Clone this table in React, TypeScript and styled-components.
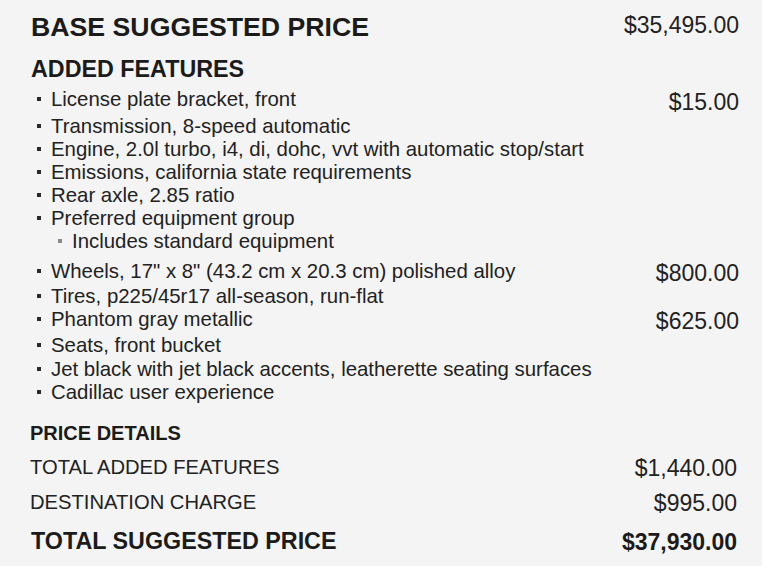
import React from "react";
import styled, { createGlobalStyle } from "styled-components";

const Global = createGlobalStyle`
  html, body { margin: 0; padding: 0; background: #ffffff; }
  body { font-family: "Liberation Sans", Arial, sans-serif; color: #222; }
`;

const Panel = styled.div`
  width: 762px;
  height: 566px;
  box-sizing: border-box;
  background: #f4f4f4;
  padding: 12px 23px 0 30px;
  display: flex;
  flex-direction: column;
`;

const HeaderRow = styled.div`
  display: flex;
  justify-content: space-between;
  align-items: flex-start;
  padding-left: 1px;
`;

const BigTitle = styled.div`
  font-weight: 700;
  font-size: 26.7px;
  line-height: 31px;
  color: #1b1b1b;
`;

const BigPrice = styled.div`
  font-size: 23px;
  line-height: 26px;
  color: #222;
`;

const SectionTitle = styled.div`
  margin-top: 12px;
  padding-left: 1px;
  font-weight: 700;
  font-size: 23.3px;
  line-height: 28px;
  color: #1b1b1b;
`;

const FeatureList = styled.ul`
  list-style: none;
  margin: 5px 0 0 0;
  padding: 0 0 0 1px;
  display: flex;
  flex-direction: column;
`;

const FeatureRow = styled.li<{ $gapAfter?: number }>`
  display: flex;
  justify-content: space-between;
  align-items: flex-start;
  margin-bottom: ${(p) => p.$gapAfter ?? 0}px;
`;

const FeatureMain = styled.div`
  display: flex;
  flex-direction: column;
`;

const FeatureLine = styled.div<{ $sub?: boolean }>`
  display: flex;
  align-items: flex-start;
  padding-left: ${(p) => (p.$sub ? 27 : 6)}px;
  gap: 10px;
  font-size: 20.4px;
  line-height: 23px;
  color: #222;
  white-space: nowrap;
`;

const Bullet = styled.span<{ $sub?: boolean }>`
  flex: none;
  width: 4px;
  height: 4px;
  margin-top: 9px;
  background: ${(p) => (p.$sub ? "#8a8a8a" : "#2a2a2a")};
`;

const FeaturePrice = styled.div<{ $h: number }>`
  font-size: 23px;
  line-height: ${(p) => p.$h}px;
  padding-top: 1px;
  color: #222;
`;

const DetailsTitle = styled.div`
  margin-top: 17px;
  font-weight: 700;
  font-size: 20px;
  line-height: 24px;
  color: #1b1b1b;
`;

const DetailRow = styled.div<{ $top: number }>`
  display: flex;
  justify-content: space-between;
  align-items: flex-start;
  margin-top: ${(p) => p.$top}px;
  padding-right: 2px;
`;

const DetailLabel = styled.div<{ $strong?: boolean }>`
  font-size: ${(p) => (p.$strong ? 23.3 : 20.2)}px;
  font-weight: ${(p) => (p.$strong ? 700 : 400)};
  line-height: 27px;
  padding-left: ${(p) => (p.$strong ? 1 : 0)}px;
  color: ${(p) => (p.$strong ? "#1b1b1b" : "#222")};
`;

const DetailPrice = styled.div<{ $strong?: boolean }>`
  font-size: 23px;
  font-weight: ${(p) => (p.$strong ? 700 : 400)};
  line-height: 29px;
  color: ${(p) => (p.$strong ? "#1b1b1b" : "#222")};
`;

type Feature = {
  text: string;
  price?: string;
  rowH?: number;
  gapAfter?: number;
  sub?: string[];
};

const features: Feature[] = [
  { text: "License plate bracket, front", price: "$15.00", rowH: 26 },
  { text: "Transmission, 8-speed automatic" },
  { text: "Engine, 2.0l turbo, i4, di, dohc, vvt with automatic stop/start" },
  { text: "Emissions, california state requirements" },
  { text: "Rear axle, 2.85 ratio" },
  { text: "Preferred equipment group", sub: ["Includes standard equipment"], gapAfter: 7 },
  { text: "Wheels, 17\" x 8\" (43.2 cm x 20.3 cm) polished alloy", price: "$800.00", rowH: 24 },
  { text: "Tires, p225/45r17 all-season, run-flat" },
  { text: "Phantom gray metallic", price: "$625.00", rowH: 25 },
  { text: "Seats, front bucket", gapAfter: 1 },
  { text: "Jet black with jet black accents, leatherette seating surfaces" },
  { text: "Cadillac user experience" },
];

export default function App() {
  return (
    <>
      <Global />
      <Panel>
        <HeaderRow>
          <BigTitle>BASE SUGGESTED PRICE</BigTitle>
          <BigPrice>$35,495.00</BigPrice>
        </HeaderRow>
        <SectionTitle>ADDED FEATURES</SectionTitle>
        <FeatureList>
          {features.map((f) => (
            <FeatureRow key={f.text} $gapAfter={f.gapAfter}>
              <FeatureMain>
                <FeatureLine>
                  <Bullet />
                  <span>{f.text}</span>
                </FeatureLine>
                {f.sub?.map((s) => (
                  <FeatureLine key={s} $sub>
                    <Bullet $sub />
                    <span>{s}</span>
                  </FeatureLine>
                ))}
              </FeatureMain>
              {f.price && <FeaturePrice $h={f.rowH ?? 26}>{f.price}</FeaturePrice>}
            </FeatureRow>
          ))}
        </FeatureList>
        <DetailsTitle>PRICE DETAILS</DetailsTitle>
        <DetailRow $top={9}>
          <DetailLabel>TOTAL ADDED FEATURES</DetailLabel>
          <DetailPrice>$1,440.00</DetailPrice>
        </DetailRow>
        <DetailRow $top={6}>
          <DetailLabel>DESTINATION CHARGE</DetailLabel>
          <DetailPrice>$995.00</DetailPrice>
        </DetailRow>
        <DetailRow $top={10}>
          <DetailLabel $strong>TOTAL SUGGESTED PRICE</DetailLabel>
          <DetailPrice $strong>$37,930.00</DetailPrice>
        </DetailRow>
      </Panel>
    </>
  );
}
